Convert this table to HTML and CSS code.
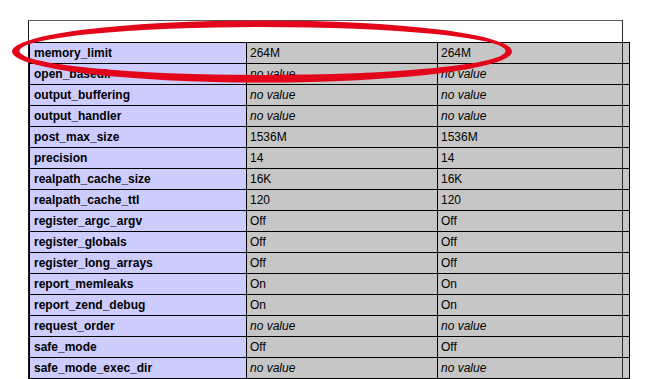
FILE: index.html
```html
<!DOCTYPE html>
<html>
<head>
<meta charset="utf-8">
<link rel="stylesheet" href="styles.css">
</head>
<body>
<div class="frame">
  <table class="info">
    <colgroup><col class="c-e"><col class="c-v1"><col class="c-v2"></colgroup>
    <tr><td class="e">memory_limit</td><td class="v">264M</td><td class="v">264M</td></tr>
    <tr><td class="e">open_basedir</td><td class="v"><i>no value</i></td><td class="v"><i>no value</i></td></tr>
    <tr><td class="e">output_buffering</td><td class="v"><i>no value</i></td><td class="v"><i>no value</i></td></tr>
    <tr><td class="e">output_handler</td><td class="v"><i>no value</i></td><td class="v"><i>no value</i></td></tr>
    <tr><td class="e">post_max_size</td><td class="v">1536M</td><td class="v">1536M</td></tr>
    <tr><td class="e">precision</td><td class="v">14</td><td class="v">14</td></tr>
    <tr><td class="e">realpath_cache_size</td><td class="v">16K</td><td class="v">16K</td></tr>
    <tr><td class="e">realpath_cache_ttl</td><td class="v">120</td><td class="v">120</td></tr>
    <tr><td class="e">register_argc_argv</td><td class="v">Off</td><td class="v">Off</td></tr>
    <tr><td class="e">register_globals</td><td class="v">Off</td><td class="v">Off</td></tr>
    <tr><td class="e">register_long_arrays</td><td class="v">Off</td><td class="v">Off</td></tr>
    <tr><td class="e">report_memleaks</td><td class="v">On</td><td class="v">On</td></tr>
    <tr><td class="e">report_zend_debug</td><td class="v">On</td><td class="v">On</td></tr>
    <tr><td class="e">request_order</td><td class="v"><i>no value</i></td><td class="v"><i>no value</i></td></tr>
    <tr><td class="e">safe_mode</td><td class="v">Off</td><td class="v">Off</td></tr>
    <tr><td class="e">safe_mode_exec_dir</td><td class="v"><i>no value</i></td><td class="v"><i>no value</i></td></tr>
  </table>
</div>
<svg class="mark" width="665" height="379" viewBox="0 0 665 379" xmlns="http://www.w3.org/2000/svg">
  <path fill="#e3061b" fill-rule="evenodd" d="M12 51.5 A250 31 0 1 0 512 51.5 A250 31 0 1 0 12 51.5 Z M19.5 51 A243 24 0 1 0 505.5 51 A243 24 0 1 0 19.5 51 Z"/>
</svg>
</body>
</html>
```
FILE: styles.css
```css
html, body {
  margin: 0;
  padding: 0;
  background: #ffffff;
  overflow: hidden;
}

body {
  position: relative;
  width: 665px;
  height: 379px;
  font-family: "Liberation Sans", Arial, Helvetica, sans-serif;
}

.frame {
  position: relative;
  box-sizing: border-box;
  width: 595px;
  height: 359px;
  margin: 20px 0 0 28px;
  padding-top: 21px;
  border-top: 1px solid #5a5a5a;
  border-left: 1px solid #1a1a1a;
}

.frame::after {
  content: "";
  position: absolute;
  top: -1px;
  right: 0;
  bottom: 0;
  width: 1px;
  background: #2a2a2a;
}

.info {
  table-layout: fixed;
  width: 601px;
  border-collapse: separate;
  border-spacing: 0;
  border-top: 1px solid #000;
  border-left: 1px solid #000;
}

.c-e { width: 217px; }
.c-v1 { width: 191px; }
.c-v2 { width: 192px; }

.info td {
  box-sizing: border-box;
  height: 21px;
  padding: 0 3px;
  border-right: 1px solid #000;
  border-bottom: 1px solid #000;
  font-size: 12px;
  line-height: 20px;
  color: #000;
  vertical-align: middle;
  white-space: nowrap;
  overflow: hidden;
}

.info td.e {
  background: #ccccff;
  font-weight: bold;
  padding-left: 4px;
}

.info td.v {
  background: #c6c6c6;
}

.info i {
  font-style: italic;
}

.mark {
  position: absolute;
  top: 0;
  left: 0;
  pointer-events: none;
}
```
